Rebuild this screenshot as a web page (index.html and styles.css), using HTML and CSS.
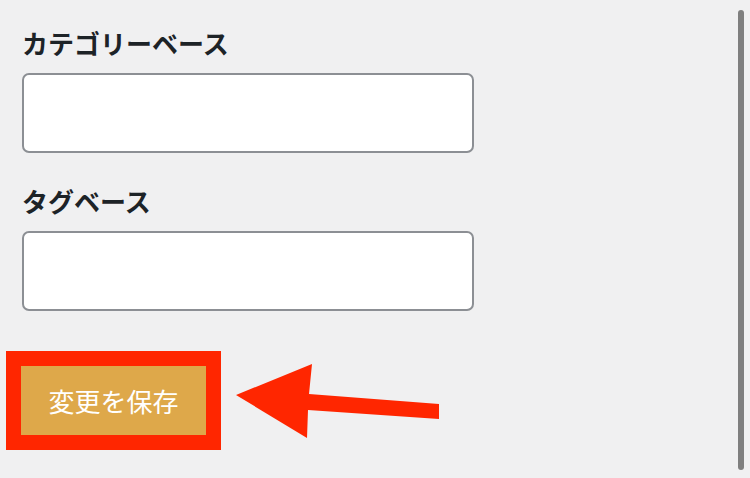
FILE: index.html
```html
<!DOCTYPE html>
<html lang="ja">
<head>
    <meta charset="UTF-8">
    <meta name="viewport" content="width=device-width, initial-scale=1.0">
    <title>パーマリンク設定</title>
    <link rel="stylesheet" href="styles.css">
</head>
<body>
    <div class="container">
        <div class="field">
            <label for="categoryBase">カテゴリーベース</label>
            <input type="text" id="categoryBase">
        </div>
        <div class="field">
            <label for="tagBase">タグベース</label>
            <input type="text" id="tagBase">
        </div>
        <div class="submit-row">
            <button class="button-primary">変更を保存</button>
            <svg class="arrow" width="205" height="80" viewBox="0 0 205 80">
                <polygon points="0,34 76,3 73,33 203,43 203,58 72,49 71,77" fill="#ff2600"/>
            </svg>
        </div>
    </div>
    <div class="scrollbar"></div>
</body>
</html>
```

FILE: styles.css
```css
html, body {
    height: 100%;
}
body {
    font-family: "Noto Sans CJK JP", "Noto Sans", sans-serif;
    margin: 0;
    background-color: #f0f0f1;
    color: #1d2327;
    overflow: hidden;
}
.container {
    padding: 26px 0 0 22px;
}
.field {
    margin-bottom: 31px;
}
label {
    display: block;
    font-size: 26px;
    font-weight: bold;
    line-height: 1.3;
    margin-bottom: 13px;
}
input {
    display: block;
    width: 452px;
    height: 80px;
    box-sizing: border-box;
    border: 2px solid #8c8f94;
    border-radius: 7px;
    background-color: #fff;
    margin: 0;
}
.submit-row {
    display: flex;
    align-items: center;
    margin-top: 50px;
}
.button-primary {
    width: 185px;
    height: 69px;
    margin: 0 0 0 -1px;
    background-color: #dea84a;
    color: #fff;
    border: none;
    border-radius: 0;
    outline: 15px solid #ff2600;
    font-family: inherit;
    font-size: 26px;
    font-weight: normal;
}
.arrow {
    display: block;
    margin-left: 30px;
}
.scrollbar {
    position: absolute;
    top: 10px;
    right: 6px;
    width: 6px;
    height: 460px;
    border-radius: 3px;
    background-color: #7f7f7f;
}
```
